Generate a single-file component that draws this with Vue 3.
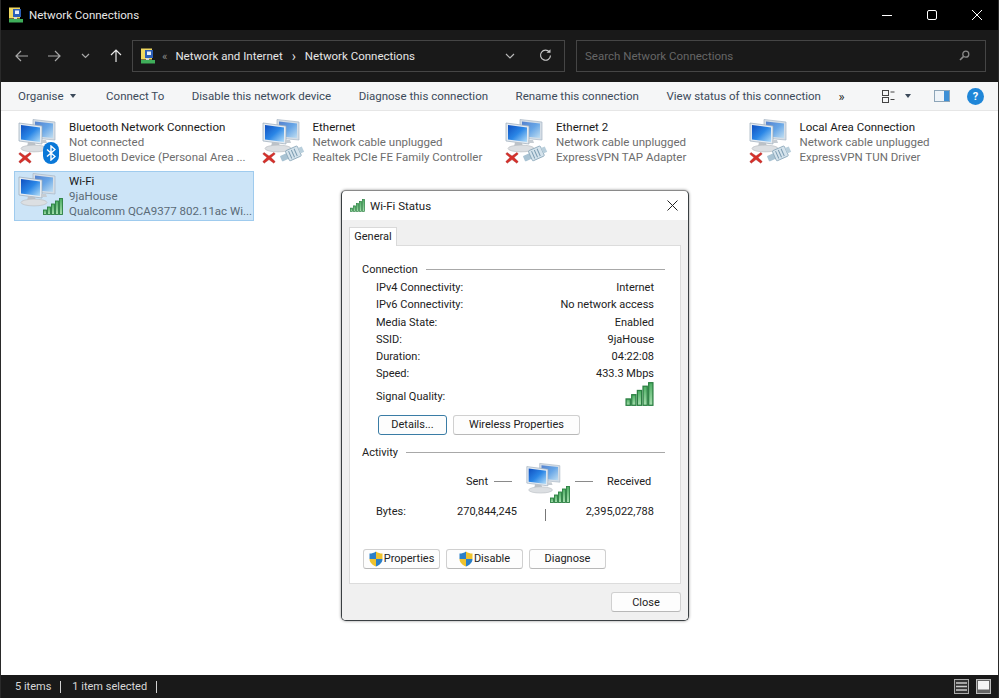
<template>
  <div class="window">
    <!-- shared icons -->
    <svg class="icon-defs" width="0" height="0">
      <defs>
        <linearGradient id="screen" x1="0" y1="0" x2="1" y2="1">
          <stop offset="0" stop-color="#0f4fc0" />
          <stop offset="0.5" stop-color="#2a86e6" />
          <stop offset="1" stop-color="#b5def7" />
        </linearGradient>
        <linearGradient id="bar" x1="0" y1="0" x2="0" y2="1">
          <stop offset="0" stop-color="#4cae62" />
          <stop offset="1" stop-color="#a8dfb0" />
        </linearGradient>
      </defs>
      <symbol id="computers" viewBox="0 0 48 48">
        <path d="M16 1.500L38 4v18l-22-2z" fill="#d5dee7" stroke="#a8b6c4" stroke-width="0.7" />
        <path d="M18 3.500L36 5.500v14.500l-18-1.700z" fill="url(#screen)" opacity="0.65" />
        <path d="M2 5l23 3v18L2 23z" fill="#e4ebf2" stroke="#9aa9b8" stroke-width="0.7" />
        <path d="M4 7l19 2.500v14.500L4 21.500z" fill="url(#screen)" />
        <path d="M11 24l7 1 1 4h-9z" fill="#bcc2c8" />
        <path d="M24 22h5l1 3h-6z" fill="#c6ccd2" />
        <ellipse cx="17" cy="30.500" rx="13" ry="3.400" fill="#dcdfe2" stroke="#b6bbc0" stroke-width="0.6" />
      </symbol>
      <symbol id="signal" viewBox="0 0 20 17">
        <g fill="url(#bar)" stroke="#2b7f42" stroke-width="0.9">
          <rect x="0.500" y="12" width="3" height="4.500" />
          <rect x="4.500" y="9" width="3" height="7.500" />
          <rect x="8.500" y="6" width="3" height="10.500" />
          <rect x="12.500" y="3" width="3" height="13.500" />
          <rect x="16.500" y="0.500" width="3" height="16" />
        </g>
      </symbol>
      <symbol id="cross" viewBox="0 0 14 13">
        <path d="M2 1.500l5 3.500 5-3.500 1.200 1.600L9 6.600l4.200 4-1.400 1.600L7 8.600l-4.800 3.600-1.400-1.600 4.200-4L.8 3.100z" fill="#d6302a" stroke="#a52020" stroke-width="0.4" />
      </symbol>
      <symbol id="plug" viewBox="0 0 25 17">
        <g transform="rotate(-24 12 9)">
          <rect x="0" y="6" width="8" height="6" rx="1" fill="#a9c3d3" />
          <rect x="7" y="3.500" width="13" height="11" rx="1" fill="#d5e3ec" stroke="#8aa6b8" stroke-width="0.8" />
          <path d="M10 5v8M13 5v8M16 5v8" stroke="#7d9db2" stroke-width="1" />
          <rect x="20" y="6" width="4" height="6" fill="#b9cfdc" />
        </g>
      </symbol>
      <symbol id="cpl" viewBox="0 0 16 16">
        <rect x="1" y="0.500" width="11" height="11" fill="#f0d860" />
        <rect x="5" y="2" width="8" height="8" fill="#2c5fb8" />
        <rect x="7" y="3.500" width="4" height="3.500" fill="#e8eef8" />
        <rect x="1" y="12" width="14" height="3.500" fill="#3fae5a" />
        <rect x="6" y="10" width="3" height="2" fill="#d8d8d8" />
      </symbol>
      <symbol id="shield" viewBox="0 0 14 16">
        <path d="M7 .5C5 2 3 2.500.5 2.500V8H7z" fill="#2a7fc9" />
        <path d="M7 .5C9 2 11 2.500 13.500 2.500V8H7z" fill="#efc32e" />
        <path d="M.5 8H7v7.500C3.500 14 .5 11.500.5 8z" fill="#efc32e" />
        <path d="M7 8h6.500c0 3.500-3 6-6.500 7.500z" fill="#2a7fc9" />
      </symbol>
    </svg>

    <header class="titlebar">
      <svg class="cpl-icon"><use href="#cpl" /></svg>
      <span class="title">Network Connections</span>
      <div class="controls">
        <svg width="12" height="12" viewBox="0 0 12 12"><path d="M1 6.500h10" stroke="#fff" fill="none" /></svg>
        <svg width="12" height="12" viewBox="0 0 12 12"><rect x="1.500" y="1.500" width="9" height="9" rx="1.500" stroke="#fff" fill="none" /></svg>
        <svg width="12" height="12" viewBox="0 0 12 12"><path d="M1 1l10 10M11 1L1 11" stroke="#fff" fill="none" /></svg>
      </div>
    </header>

    <nav class="navbar">
      <div class="nav-buttons">
        <svg width="13" height="12" viewBox="0 0 13 12"><path d="M1 6h12M6 1L1 6l5 5" stroke="#a8a8a8" stroke-width="1.200" fill="none" /></svg>
        <svg width="13" height="12" viewBox="0 0 13 12"><path d="M0 6h12M7 1l5 5-5 5" stroke="#a8a8a8" stroke-width="1.200" fill="none" /></svg>
        <svg width="9" height="6" viewBox="0 0 9 6"><path d="M1 1l3.500 3.500L8 1" stroke="#a8a8a8" stroke-width="1.200" fill="none" /></svg>
        <svg width="12" height="13" viewBox="0 0 12 13"><path d="M6 13V1M1 6l5-5 5 5" stroke="#e8e8e8" stroke-width="1.200" fill="none" /></svg>
      </div>
      <div class="address">
        <svg class="cpl-icon"><use href="#cpl" /></svg>
        <span class="crumb-more">«</span>
        <span>Network and Internet</span>
        <span class="crumb-sep">›</span>
        <span>Network Connections</span>
        <svg class="addr-chevron" width="10" height="6" viewBox="0 0 10 6"><path d="M1 1l4 4 4-4" stroke="#b8b8b8" stroke-width="1.200" fill="none" /></svg>
        <svg class="addr-refresh" width="13" height="13" viewBox="0 0 13 13"><path d="M10.500 3.200A5 5 0 1 0 11.500 6.500" stroke="#c8c8c8" stroke-width="1.200" fill="none" /><path d="M7.500 3.800h4v-3.500z" fill="#c8c8c8" /></svg>
      </div>
      <div class="search">
        <span>Search Network Connections</span>
        <svg width="11" height="11" viewBox="0 0 11 11"><circle cx="6.800" cy="4.200" r="3" stroke="#8a8a8a" stroke-width="1.300" fill="none" /><path d="M4.600 6.400L1 10" stroke="#8a8a8a" stroke-width="1.600" /></svg>
      </div>
    </nav>

    <div class="toolbar">
      <span class="tool organise">Organise <i class="caret"></i></span>
      <span v-for="t in tools" :key="t" class="tool">{{ t }}</span>
      <span class="more">»</span>
      <div class="tool-right">
        <svg width="13" height="13" viewBox="0 0 13 13"><g stroke="#444" fill="none"><rect x="0.500" y="0.500" width="6" height="5" /><rect x="0.500" y="7.500" width="6" height="5" /><path d="M8.500 2h4M8.500 9.500h4" /></g></svg>
        <i class="caret dark"></i>
        <svg class="pane" width="16" height="12" viewBox="0 0 16 12"><rect x="0.500" y="0.500" width="15" height="11" fill="#eef3f8" stroke="#8da5b8" /><rect x="10" y="1" width="5" height="10" fill="#3d8fd6" /></svg>
        <span class="help">?</span>
      </div>
    </div>

    <main class="content">
      <div v-for="c in connections" :key="c.name" class="item" :class="{ selected: c.selected }">
        <div class="item-icon">
          <svg class="computers"><use href="#computers" /></svg>
          <svg v-if="c.badge !== 'wifi'" class="x-mark"><use href="#cross" /></svg>
          <span v-if="c.badge === 'bt'" class="bt">
            <svg width="10" height="16" viewBox="0 0 10 16"><path d="M1 4.500l8 7L5 15V1l4 3.500-8 7" stroke="#fff" stroke-width="1.400" fill="none" /></svg>
          </span>
          <svg v-if="c.badge === 'plug'" class="plug"><use href="#plug" /></svg>
          <svg v-if="c.badge === 'wifi'" class="wifi-bars"><use href="#signal" /></svg>
        </div>
        <div class="item-text">
          <div class="item-name">{{ c.name }}</div>
          <div>{{ c.state }}</div>
          <div>{{ c.device }}</div>
        </div>
      </div>

      <section class="dialog">
        <div class="dialog-title">
          <svg class="dialog-signal"><use href="#signal" /></svg>
          <span>Wi-Fi Status</span>
          <svg class="dialog-close" width="11" height="11" viewBox="0 0 11 11"><path d="M.5.500l10 10M10.500.500l-10 10" stroke="#222" fill="none" /></svg>
        </div>
        <div class="dialog-body">
          <div class="tab">General</div>
          <div class="panel">
            <div class="group-head"><span>Connection</span><i></i></div>
            <div v-for="r in statusRows" :key="r[0]" class="row">
              <span>{{ r[0] }}</span><span>{{ r[1] }}</span>
            </div>
            <div class="row signal-row">
              <span>Signal Quality:</span>
              <svg class="signal-big"><use href="#signal" /></svg>
            </div>
            <div class="btn-row first">
              <button class="btn default">Details...</button>
              <button class="btn wide">Wireless Properties</button>
            </div>

            <div class="group-head activity"><span>Activity</span><i></i></div>
            <div class="sent-row">
              <span class="sent">Sent</span><i class="dash"></i>
              <div class="big-pc">
                <svg class="big-computers"><use href="#computers" /></svg>
                <svg class="big-bars"><use href="#signal" /></svg>
              </div>
              <i class="dash dash-right"></i><span class="received">Received</span>
            </div>
            <div class="bytes-row">
              <span class="bytes-label">Bytes:</span>
              <span class="bytes-sent">270,844,245</span>
              <i class="bytes-div"></i>
              <span class="bytes-recv">2,395,022,788</span>
            </div>
            <div class="btn-row actions">
              <button class="btn action"><svg class="shield"><use href="#shield" /></svg>Properties</button>
              <button class="btn action"><svg class="shield"><use href="#shield" /></svg>Disable</button>
              <button class="btn action">Diagnose</button>
            </div>
          </div>
          <div class="dialog-foot"><button class="btn close">Close</button></div>
        </div>
      </section>
    </main>

    <footer class="statusbar">
      <span>5 items</span><i class="sep"></i>
      <span>1 item selected</span><i class="sep"></i>
      <div class="status-right">
        <svg width="15" height="15" viewBox="0 0 15 15"><rect x="0.500" y="0.500" width="14" height="14" fill="#333" stroke="#aaa" /><path d="M2 4h11M2 7.500h11M2 11h11" stroke="#ccc" stroke-width="1.300" /></svg>
        <svg width="15" height="15" viewBox="0 0 15 15"><rect x="0.500" y="0.500" width="14" height="14" fill="#666" stroke="#bbb" /><rect x="2" y="2" width="11" height="8.500" fill="#f4f4f4" /></svg>
      </div>
    </footer>
  </div>
</template>

<script setup>
const tools = [
  'Connect To',
  'Disable this network device',
  'Diagnose this connection',
  'Rename this connection',
  'View status of this connection',
];

const connections = [
  { name: 'Bluetooth Network Connection', state: 'Not connected', device: 'Bluetooth Device (Personal Area ...', badge: 'bt' },
  { name: 'Ethernet', state: 'Network cable unplugged', device: 'Realtek PCIe FE Family Controller', badge: 'plug' },
  { name: 'Ethernet 2', state: 'Network cable unplugged', device: 'ExpressVPN TAP Adapter', badge: 'plug' },
  { name: 'Local Area Connection', state: 'Network cable unplugged', device: 'ExpressVPN TUN Driver', badge: 'plug' },
  { name: 'Wi-Fi', state: '9jaHouse', device: 'Qualcomm QCA9377 802.11ac Wi...', badge: 'wifi', selected: true },
];

const statusRows = [
  ['IPv4 Connectivity:', 'Internet'],
  ['IPv6 Connectivity:', 'No network access'],
  ['Media State:', 'Enabled'],
  ['SSID:', '9jaHouse'],
  ['Duration:', '04:22:08'],
  ['Speed:', '433.3 Mbps'],
];
</script>

<style>
html,
body {
  margin: 0;
  background: #111;
}
</style>

<style scoped>
.window {
  position: relative;
  height: 100vh;
  display: flex;
  flex-direction: column;
  overflow: hidden;
  font-family: Roboto, 'Open Sans', sans-serif;
  font-size: 11.5px;
  color: #222;
  background: #fff;
  border-left: 1px solid #2a2a2a;
  border-right: 1px solid #2a2a2a;
  box-sizing: border-box;
}

.icon-defs {
  position: absolute;
}

.titlebar {
  height: 30px;
  flex: none;
  display: flex;
  align-items: center;
  padding-left: 7px;
  background: #000;
  color: #e8e8e8;
}

.cpl-icon {
  width: 16px;
  height: 16px;
  flex: none;
}

.title {
  margin-left: 5px;
}

.controls {
  margin-left: auto;
  display: flex;
  gap: 33px;
  padding-right: 15px;
}

.navbar {
  height: 52px;
  flex: none;
  display: flex;
  align-items: center;
  padding-bottom: 1px;
  box-sizing: border-box;
  background: #191919;
  color: #e6e6e6;
}

.nav-buttons {
  width: 131px;
  flex: none;
  display: flex;
  align-items: center;
  gap: 20px;
  padding-left: 14px;
  box-sizing: border-box;
}

.address,
.search {
  height: 32px;
  display: flex;
  align-items: center;
  box-sizing: border-box;
  border: 1px solid #454545;
}

.address {
  width: 433px;
  padding-left: 7px;
  gap: 7px;
}

.crumb-more {
  color: #8c8c8c;
  margin-right: 1px;
  margin-left: -1px;
}

.crumb-sep {
  color: #ddd;
  font-size: 14px;
  line-height: 1;
  margin: 0 2px;
}

.addr-chevron {
  margin-left: auto;
  margin-right: 5px;
}

.addr-refresh {
  margin-left: 12px;
  margin-right: 12px;
}

.search {
  width: 410px;
  margin-left: 11px;
  padding: 0 15px 0 8px;
  justify-content: space-between;
  color: #666;
}

.toolbar {
  height: 29px;
  flex: none;
  display: flex;
  align-items: center;
  gap: 27.500px;
  padding-left: 17px;
  background: #f5f6f7;
  color: #3c4a5a;
  border-bottom: 1px solid #e6e6e6;
  box-sizing: border-box;
  white-space: nowrap;
}

.organise {
  display: flex;
  align-items: center;
  gap: 6px;
  margin-right: 3px;
}

.caret {
  display: inline-block;
  width: 0;
  height: 0;
  border-left: 3.500px solid transparent;
  border-right: 3.500px solid transparent;
  border-top: 4px solid #3c4a5a;
}

.caret.dark {
  margin: 0 0 0 10px;
}

.more {
  font-size: 13px;
  line-height: 1;
  color: #222;
  margin-left: -10px;
}

.tool-right {
  margin-left: auto;
  display: flex;
  align-items: center;
  padding-right: 14px;
}

.pane {
  margin-left: 23px;
}

.help {
  width: 17px;
  height: 17px;
  margin-left: 17px;
  border-radius: 50%;
  background: #1f86d8;
  color: #fff;
  font-size: 11px;
  font-weight: 700;
  line-height: 17px;
  text-align: center;
}

.content {
  position: relative;
  flex: 1;
  display: grid;
  grid-template-columns: repeat(4, 240px);
  grid-auto-rows: 50px;
  align-content: start;
  gap: 4px 3.500px;
  padding: 6px 0 0 13px;
  background: #fff;
}

.item {
  display: flex;
  box-sizing: border-box;
  border: 1px solid transparent;
  color: #6d6d6d;
  line-height: 15px;
}

.item.selected {
  background: #cce4f7;
  border-color: #9fcbee;
  color: #5a6a76;
}

.item-icon {
  position: relative;
  width: 54px;
  height: 48px;
  flex: none;
}

.computers {
  position: absolute;
  left: 2px;
  top: 0;
  width: 48px;
  height: 48px;
}

.x-mark {
  position: absolute;
  left: 3px;
  top: 33px;
  width: 14px;
  height: 13px;
}

.bt {
  position: absolute;
  left: 28px;
  top: 24px;
  width: 16px;
  height: 22px;
  border-radius: 8px;
  background: #0a78d8;
  display: flex;
  align-items: center;
  justify-content: center;
}

.plug {
  position: absolute;
  left: 21px;
  top: 27px;
  width: 25px;
  height: 17px;
}

.wifi-bars {
  position: absolute;
  left: 28px;
  top: 26px;
  width: 20px;
  height: 17px;
}

.item-text {
  padding-top: 2px;
  white-space: nowrap;
}

.item-name {
  color: #1a1a1a;
}

/* floating dialog */
.dialog {
  position: absolute;
  left: 340px;
  top: 79px;
  width: 348px;
  height: 431px;
  display: flex;
  flex-direction: column;
  box-sizing: border-box;
  background: #fff;
  border: 1px solid #3a3f42;
  border-top-color: #8a8a8a;
  border-radius: 5px;
  box-shadow: 0 0 3px rgba(0, 0, 0, 0.45);
  overflow: hidden;
  color: #222;
}

.dialog-title {
  height: 29px;
  flex: none;
  display: flex;
  align-items: center;
  padding: 0 10px 0 8px;
  font-size: 11.5px;
}

.dialog-signal {
  width: 15px;
  height: 13px;
  margin-right: 5px;
}

.dialog-close {
  margin-left: auto;
}

.dialog-body {
  flex: 1;
  display: flex;
  flex-direction: column;
  padding: 7px 7px 0;
  background: #f0f0f0;
}

.tab {
  align-self: flex-start;
  width: 48px;
  height: 19px;
  line-height: 18px;
  text-align: center;
  box-sizing: border-box;
  background: #fff;
  border: 1px solid #d9d9d9;
  border-bottom: none;
  margin-bottom: -1px;
  position: relative;
  z-index: 1;
  font-size: 11px;
}

.panel {
  height: 339px;
  flex: none;
  box-sizing: border-box;
  padding: 15px 15px 0 12px;
  background: #fff;
  border: 1px solid #dcdcdc;
}

.group-head {
  display: flex;
  align-items: center;
  height: 17px;
  margin-bottom: 1px;
  font-size: 11px;
}

.group-head i {
  flex: 1;
  height: 1px;
  margin-left: 8px;
  background: #a8a8a8;
}

.row {
  display: flex;
  justify-content: space-between;
  height: 17.300px;
  line-height: 17px;
  padding: 0 11px 0 14px;
  font-size: 11px;
}

.signal-row {
  height: 28px;
  align-items: center;
}

.signal-big {
  width: 29px;
  height: 24px;
  margin-top: -6px;
}

.btn-row {
  display: flex;
  gap: 6px;
}

.btn-row.first {
  margin-top: 4px;
  padding-left: 16px;
}

.btn {
  height: 20px;
  padding: 0;
  font: inherit;
  font-size: 11px;
  color: #222;
  background: #fdfdfd;
  border: 1px solid #d0d0d0;
  border-bottom-color: #b8b8b8;
  border-radius: 3px;
}

.btn.default {
  width: 69px;
  border: 1.500px solid #3a7ca5;
}

.btn.wide {
  width: 127px;
}

.group-head.activity {
  margin-top: 9px;
}

.sent-row {
  height: 40px;
  display: flex;
  align-items: flex-start;
  padding-left: 104px;
}

.sent-row span {
  font-size: 11px;
  line-height: 17px;
  margin-top: 11px;
}

.dash {
  width: 18px;
  height: 1px;
  margin: 19px 12px 0 6px;
  background: #8a8a8a;
}

.big-pc {
  position: relative;
  width: 46px;
  height: 40px;
  margin-left: -1px;
}

.big-computers {
  position: absolute;
  left: 2px;
  top: 0;
  width: 44px;
  height: 44px;
}

.big-bars {
  position: absolute;
  left: 27px;
  top: 24px;
  width: 20px;
  height: 17px;
}

.dash-right {
  margin-left: 6px;
  margin-right: 14px;
}

.bytes-row {
  display: flex;
  align-items: center;
  height: 20px;
  padding-left: 14px;
  font-size: 11px;
}

.bytes-label {
  width: 60px;
}

.bytes-sent {
  width: 81px;
  text-align: right;
}

.bytes-div {
  width: 1px;
  height: 12px;
  margin: 6px 0 0 28px;
  background: #777;
}

.bytes-recv {
  margin-left: auto;
  margin-right: 11px;
}

.btn-row.actions {
  margin-top: 27px;
  padding-left: 1px;
}

.btn.action {
  width: 77px;
  display: flex;
  align-items: center;
  justify-content: center;
}

.shield {
  width: 14px;
  height: 16px;
  margin-right: 1px;
}

.dialog-foot {
  display: flex;
  justify-content: flex-end;
  padding-top: 8px;
}

.btn.close {
  width: 70px;
}

.statusbar {
  height: 23px;
  flex: none;
  display: flex;
  align-items: center;
  padding-left: 14px;
  font-size: 11px;
  background: #191919;
  color: #d8d8d8;
}

.sep {
  width: 1px;
  height: 12px;
  margin: 0 11px 0 9px;
  background: #d0d0d0;
}

.status-right {
  margin-left: auto;
  display: flex;
  gap: 7px;
  padding-right: 7px;
}
</style>
